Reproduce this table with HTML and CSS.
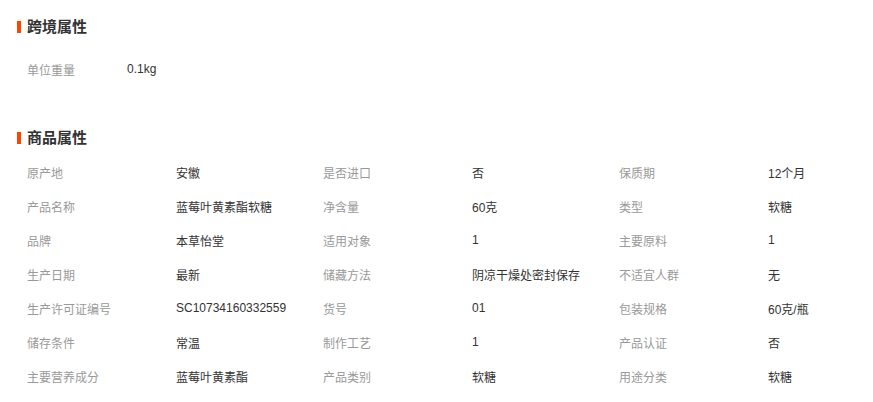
FILE: index.html
```html
<!DOCTYPE html>
<html lang="zh-CN">
<head>
<meta charset="utf-8">
<title>属性</title>
<link rel="stylesheet" href="styles.css">
</head>
<body>
<div class="page">
  <section class="sec sec-cross">
    <h2 class="sec-title"><span class="bar"></span>跨境属性</h2>
    <div class="rows-cross">
      <div class="row-cross"><span class="lbl lbl-short">单位重量</span><span class="val">0.1kg</span></div>
    </div>
  </section>
  <section class="sec sec-goods">
    <h2 class="sec-title"><span class="bar"></span>商品属性</h2>
    <div class="grid">
      <span class="lbl">原产地</span><span class="val">安徽</span>
      <span class="lbl">是否进口</span><span class="val">否</span>
      <span class="lbl">保质期</span><span class="val">12个月</span>

      <span class="lbl">产品名称</span><span class="val">蓝莓叶黄素酯软糖</span>
      <span class="lbl">净含量</span><span class="val">60克</span>
      <span class="lbl">类型</span><span class="val">软糖</span>

      <span class="lbl">品牌</span><span class="val">本草怡堂</span>
      <span class="lbl">适用对象</span><span class="val">1</span>
      <span class="lbl">主要原料</span><span class="val">1</span>

      <span class="lbl">生产日期</span><span class="val">最新</span>
      <span class="lbl">储藏方法</span><span class="val">阴凉干燥处密封保存</span>
      <span class="lbl">不适宜人群</span><span class="val">无</span>

      <span class="lbl">生产许可证编号</span><span class="val">SC10734160332559</span>
      <span class="lbl">货号</span><span class="val">01</span>
      <span class="lbl">包装规格</span><span class="val">60克/瓶</span>

      <span class="lbl">储存条件</span><span class="val">常温</span>
      <span class="lbl">制作工艺</span><span class="val">1</span>
      <span class="lbl">产品认证</span><span class="val">否</span>

      <span class="lbl">主要营养成分</span><span class="val">蓝莓叶黄素酯</span>
      <span class="lbl">产品类别</span><span class="val">软糖</span>
      <span class="lbl">用途分类</span><span class="val">软糖</span>
    </div>
  </section>
</div>
</body>
</html>
```
FILE: styles.css
```css
html, body {
  margin: 0;
  padding: 0;
  background: #fff;
}
body {
  font-family: "Liberation Sans", "Noto Sans CJK SC", sans-serif;
  font-size: 12px;
  color: #333;
}
.page {
  padding: 17px 0 0 17px;
}
.sec-title {
  display: flex;
  align-items: center;
  gap: 6px;
  margin: 0;
  height: 20px;
  line-height: 20px;
  font-size: 15px;
  font-weight: bold;
  color: #333;
}
.bar {
  display: block;
  width: 4px;
  height: 12px;
  background: #ff4400;
}
.rows-cross {
  padding: 15px 0 0 10px;
}
.row-cross {
  display: flex;
  height: 34px;
  align-items: center;
}
.lbl {
  color: #999;
}
.lbl-short {
  width: 100px;
}
.sec-goods {
  margin-top: 42px;
}
.grid {
  display: grid;
  grid-template-columns: 149px 147px 149px 147px 149px 1fr;
  grid-auto-rows: 34px;
  align-items: center;
  padding: 7px 0 0 10px;
}
.val {
  color: #333;
}
```
